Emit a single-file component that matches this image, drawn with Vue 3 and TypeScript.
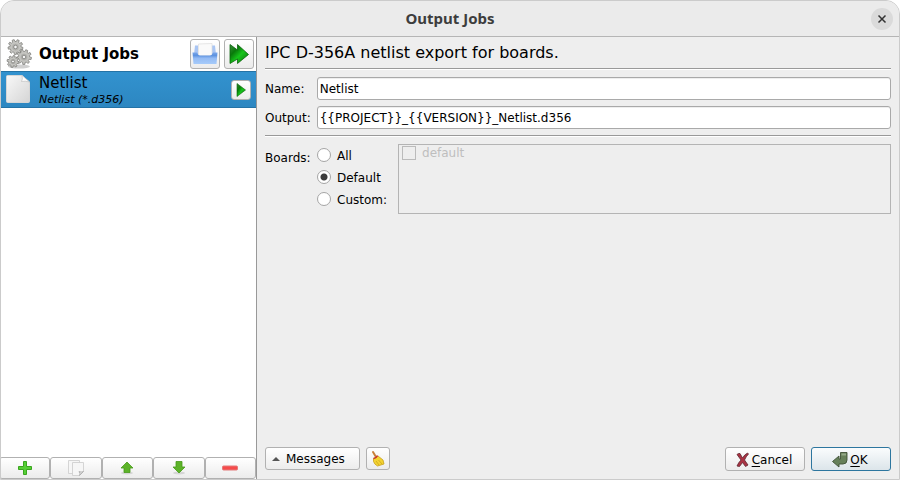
<script setup lang="ts">
import { ref } from 'vue'

type Scope = 'all' | 'default' | 'custom'

const name = ref('Netlist')
const output = ref('{{PROJECT}}_{{VERSION}}_Netlist.d356')
const scope = ref<Scope>('default')
const scopes: { value: Scope; label: string }[] = [
  { value: 'all', label: 'All' },
  { value: 'default', label: 'Default' },
  { value: 'custom', label: 'Custom:' },
]

// Outline of a toothed wheel: each tooth is a trapezoid between the inner and outer radius.
function gearPath(x: number, y: number, r: number, teeth: number): string {
  const step = (Math.PI * 2) / teeth
  const profile: [number, number][] = [
    [-0.32, r * 0.74],
    [-0.2, r],
    [0.2, r],
    [0.32, r * 0.74],
  ]
  const points: string[] = []
  for (let i = 0; i < teeth; i++) {
    for (const [offset, radius] of profile) {
      const a = (i + offset) * step + 0.2
      points.push(`${(x + radius * Math.cos(a)).toFixed(2)} ${(y + radius * Math.sin(a)).toFixed(2)}`)
    }
  }
  return `M${points.join('L')}z`
}

const gears = [
  { x: 9.5, y: 8, r: 7.5, teeth: 9 },
  { x: 18, y: 18, r: 7.5, teeth: 9 },
  { x: 7, y: 22.5, r: 6, teeth: 8 },
].map((g) => ({ ...g, d: gearPath(g.x, g.y, g.r, g.teeth) }))
</script>

<template>
  <div class="window">
    <header class="titlebar">
      <h1>Output Jobs</h1>
      <button class="close" type="button" aria-label="Close">
        <svg width="22" height="22" viewBox="0 0 22 22"><path d="M7.5 7.5l7 7M14.5 7.5l-7 7" stroke="#333" stroke-width="1.5" /></svg>
      </button>
    </header>

    <div class="body">
      <aside class="side">
        <div class="side-head">
          <svg class="gears" width="28" height="30" viewBox="0 0 28 30">
            <ellipse cx="13" cy="27.5" rx="11" ry="2" fill="#d0d0d0" />
            <g v-for="g in gears" :key="g.x">
              <path :d="g.d" fill="#c4c4c0" stroke="#80807c" stroke-width=".8" />
              <circle :cx="g.x" :cy="g.y" :r="g.r * 0.45" fill="#b2b2ae" />
              <circle :cx="g.x" :cy="g.y" :r="g.r * 0.24" fill="#f4f4f4" stroke="#7c7c78" stroke-width=".8" />
            </g>
          </svg>
          <h2>Output Jobs</h2>
          <button class="btn tool" type="button" aria-label="Open output folder">
            <svg width="26" height="26" viewBox="0 0 26 26">
              <defs>
                <linearGradient id="tray" x2="0" y2="1"><stop offset="0" stop-color="#7ba7ea" /><stop offset=".25" stop-color="#5b91df" /><stop offset=".5" stop-color="#94bbf4" /><stop offset="1" stop-color="#a6cbfa" /></linearGradient>
              </defs>
              <path d="M3 4.5h3v9H2zM20 4.5h3l1 9h-4z" fill="#a9c5f3" />
              <path d="M6.5 3l13.5-.5V15h-13.500z" fill="#fafafa" stroke="#ddd" stroke-width=".7" />
              <path d="M.5 11.500h4.500q1 3 3 3h10q2 0 3-3h4.500l-1 11.500h-23z" fill="url(#tray)" />
            </svg>
          </button>
          <button class="btn tool" type="button" aria-label="Run all jobs">
            <svg width="22" height="22" viewBox="0 0 22 22">
              <defs>
                <linearGradient id="run" x2="1" y2="1"><stop offset="0" stop-color="#3c8a3c" /><stop offset=".3" stop-color="#087a0a" /><stop offset=".55" stop-color="#17c41b" /><stop offset="1" stop-color="#086a0a" /></linearGradient>
              </defs>
              <path d="M2 1.5L9.5 7V1.5L20.5 11.500L9.5 20.500V16L2 20.500z" fill="url(#run)" stroke="#0a640c" stroke-width=".8" />
            </svg>
          </button>
        </div>

        <ul class="jobs">
          <li class="job">
            <svg class="file" width="24" height="29" viewBox="0 0 24 29">
              <defs><linearGradient id="page" x2="1" y2="1"><stop offset="0" stop-color="#f8f8f8" /><stop offset="1" stop-color="#d5d5d5" /></linearGradient></defs>
              <path d="M1.5 .5h14.500L23.500 7v19.500q0 1-1 1H1.500q-1 0-1-1V1.500q0-1 1-1z" fill="url(#page)" stroke="#d6d6d6" />
              <path d="M16 .5q1 4-.5 6 3.500-1 8 .5z" fill="#fff" stroke="#bbb" stroke-width=".6" />
            </svg>
            <div class="job-text">
              <span class="job-name">{{ name }}</span>
              <em>Netlist (*.d356)</em>
            </div>
            <button class="btn play" type="button" aria-label="Run job">
              <svg width="12" height="14" viewBox="0 0 12 14"><path d="M2 .5L10.500 7L2 13.500z" fill="url(#run)" stroke="#0a640c" stroke-width=".6" /></svg>
            </button>
          </li>
        </ul>

        <div class="actions">
          <button class="btn" type="button" aria-label="Add job">
            <svg width="16" height="16" viewBox="0 0 16 16"><path d="M6.500 1.500h3v5h5v3h-5v5h-3v-5h-5v-3h5z" fill="#55cf35" stroke="#3aa51f" /></svg>
          </button>
          <button class="btn" type="button" aria-label="Duplicate job" disabled>
            <svg width="18" height="18" viewBox="0 0 18 18" fill="#f6f6f6" stroke="#ccc" stroke-width=".8"><path d="M1.500 1.500h11v13h-11z" /><path d="M5.500 3.500h11v9l-4 4h-7z" /><path d="M12.500 16.500q1-2-.5-4 2 1 4.500 0z" fill="#ddd" stroke="#aaa" /></svg>
          </button>
          <button class="btn" type="button" aria-label="Move up">
            <svg width="16" height="16" viewBox="0 0 16 16"><ellipse cx="8" cy="13" rx="6" ry="1.500" fill="#d5d5d5" /><path d="M8 2l6 6h-3v4.500H5V8H2z" fill="#5db329" stroke="#489b1b" stroke-width=".8" /></svg>
          </button>
          <button class="btn" type="button" aria-label="Move down">
            <svg width="16" height="16" viewBox="0 0 16 16"><ellipse cx="8" cy="13" rx="6" ry="1.500" fill="#d5d5d5" /><path d="M8 13l6-6h-3V1.500H5V7H2z" fill="#5db329" stroke="#489b1b" stroke-width=".8" /></svg>
          </button>
          <button class="btn" type="button" aria-label="Remove job">
            <svg width="16" height="16" viewBox="0 0 16 16"><rect x=".5" y="6" width="15" height="4" rx="1" fill="#f64b4b" stroke="#e27a7a" /></svg>
          </button>
        </div>
      </aside>

      <main class="main">
        <h2 class="heading">IPC D-356A netlist export for boards.</h2>
        <hr />
        <div class="fields">
          <label for="job-name">Name:</label>
          <input id="job-name" v-model="name" class="text" type="text" />
          <label for="job-output">Output:</label>
          <input id="job-output" v-model="output" class="text" type="text" />
        </div>
        <hr />
        <div class="boards">
          <span id="boards-label" class="boards-label">Boards:</span>
          <div class="radios" role="radiogroup" aria-labelledby="boards-label">
            <label v-for="s in scopes" :key="s.value" class="option">
              <input v-model="scope" type="radio" name="scope" :value="s.value" />{{ s.label }}
            </label>
          </div>
          <div class="list">
            <label class="option off"><input type="checkbox" :disabled="scope !== 'custom'" />default</label>
          </div>
        </div>

        <footer class="footer">
          <button class="btn small messages" type="button">
            <svg width="8" height="4" viewBox="0 0 8 4"><path d="M4 0l4 4H0z" fill="#555" /></svg>Messages
          </button>
          <button class="btn small clear" type="button" aria-label="Clear messages">
            <svg width="16" height="18" viewBox="0 0 16 18">
              <path d="M3 2l3 5" stroke="#c8813a" stroke-width="2" stroke-linecap="round" />
              <path d="M3.500 8.500q2.500 0 4.500-2.500l5 4 1 4-6.500 2q-3-1.500-4-4.500z" fill="#f3d331" stroke="#c79f1a" stroke-width=".8" />
              <path d="M3.500 8.500q3-.5 4-3" fill="none" stroke="#c9342b" stroke-width="1.500" />
              <path d="M6 11l3 4M8.500 10l3.500 4" stroke="#cda41d" stroke-width=".8" />
            </svg>
          </button>
          <span class="spacer"></span>
          <button class="btn wide" type="button">
            <svg width="14" height="16" viewBox="0 0 14 16"><path d="M1 2.500q1.500-1.500 3-1L6.500 6Q8.500 2.500 11.500 1l1 1Q10 4.500 8.500 8l3.500 5-2.500 1.500L6.500 10.500Q5 12.500 3.500 14.500l-2.500-.5Q2.500 10.500 5 8z" fill="#a93343" stroke="#5e2630" stroke-width=".8" /></svg>
            <span><u>C</u>ancel</span>
          </button>
          <button class="btn wide primary" type="button">
            <svg width="16" height="16" viewBox="0 0 16 16"><path d="M8.500 .5h6.500v7.500q0 4-4 4H7v3L.5 9.500 7 4v3h1.500z" fill="#66805a" stroke="#3e5037" stroke-width=".9" /><path d="M9.500 1.500h4.500v2H9.500z" fill="#94a989" /></svg>
            <span><u>O</u>K</span>
          </button>
        </footer>
      </main>
    </div>
  </div>
</template>

<style>
body {
  background: #fff;
}
</style>

<style scoped>
.window,
.window * {
  box-sizing: border-box;
}
.window {
  display: flex;
  flex-direction: column;
  min-height: 100vh;
  overflow: hidden;
  border: 1px solid #cbcbcb;
  border-radius: 14px 14px 0 0;
  background: #eee;
  color: #000;
  font: 12px/16px "DejaVu Sans", sans-serif;
}
h1,
h2 {
  margin: 0;
}
svg {
  display: block;
  flex: none;
}
button,
input {
  margin: 0;
  font: inherit;
  color: inherit;
}
.titlebar {
  display: grid;
  grid-template-columns: 1fr auto 1fr;
  align-items: center;
  height: 36px;
  padding: 0 6px;
  border-bottom: 1px solid #b5b5b5;
  background: #ebebeb;
}
.titlebar h1 {
  grid-column: 2;
  padding-bottom: 2px;
  color: #3d3d3d;
  font: bold 15px/20px "Noto Sans", sans-serif;
}
.close {
  justify-self: end;
  padding: 0;
  border: 0;
  border-radius: 50%;
  background: #dadada;
}
.body {
  display: grid;
  flex: 1;
  grid-template-columns: 256px 1fr;
}
.side {
  display: flex;
  flex-direction: column;
  border-right: 1px solid #999;
  background: #fff;
}
.side-head {
  display: flex;
  align-items: center;
  gap: 4px;
  height: 34px;
  padding: 0 2px 0 5px;
}
.side-head h2 {
  flex: 1;
  padding-left: 1px;
  font-size: 15px;
  line-height: 20px;
}
.btn {
  display: flex;
  align-items: center;
  justify-content: center;
  padding: 0;
  border: 1px solid #b1b1b1;
  border-radius: 3px;
  background: linear-gradient(#fff, #ececec);
}
.tool {
  width: 30px;
  height: 30px;
}
.jobs {
  flex: 1;
  margin: 0;
  padding: 0;
  list-style: none;
}
.job {
  display: flex;
  align-items: center;
  gap: 8px;
  height: 37px;
  padding: 0 5px;
  border: solid #2473a6;
  border-width: 1px 0;
  background: linear-gradient(#3292cf, #2d87c1);
}
.job-text {
  display: flex;
  flex: 1;
  flex-direction: column;
  padding: 2px 0 0 1px;
}
.job-name {
  font-size: 15px;
  line-height: 18px;
}
.job-text em {
  font-size: 11px;
  line-height: 16px;
}
.play {
  width: 20px;
  height: 20px;
}
.actions {
  display: grid;
  grid-template-columns: repeat(5, 1fr);
  margin-left: -2px;
}
.actions .btn {
  height: 22px;
}
.main {
  display: flex;
  flex-direction: column;
  padding: 0 8px 8px;
}
.heading {
  padding: 6px 0 5px;
  font-size: 16px;
  font-weight: normal;
  line-height: 20px;
}
hr {
  width: 100%;
  height: 2px;
  margin: 0;
  border: 0;
  border-top: 1px solid #999;
  background: #fff;
}
.fields {
  display: grid;
  grid-template-columns: auto 1fr;
  align-items: center;
  gap: 6px;
  padding: 7px 0 6px;
}
.text {
  width: 100%;
  height: 23px;
  padding: 0 2px;
  border: 1px solid #a9a9a9;
  border-radius: 3px;
  background: #fff;
  box-shadow: inset 0 1px #eee;
}
.boards {
  display: flex;
  padding-top: 7px;
}
.boards-label {
  width: 52px;
  padding-top: 6px;
}
.radios {
  display: grid;
  gap: 6px;
  align-content: start;
  padding-top: 4px;
}
.option {
  display: flex;
  align-items: center;
  gap: 6px;
}
.option input {
  appearance: none;
  width: 14px;
  height: 14px;
  border: 1px solid #a5a5a5;
  background: #fff;
}
.radios .option {
  align-items: flex-start;
}
.radios input {
  border-radius: 50%;
}
.radios input:checked {
  background: radial-gradient(circle, #3b3b3b 3px, #fff 4px);
}
.list {
  flex: 1;
  height: 70px;
  margin-left: 11px;
  padding: 0 3px;
  border: 1px solid #b4b4b4;
}
.off {
  color: #bebebe;
}
.off input {
  border-color: #bbb;
  background: #eee;
}
.footer {
  display: flex;
  gap: 6px;
  margin-top: auto;
}
.footer .btn {
  height: 24px;
}
.footer .small {
  height: 23px;
}
.footer .messages {
  justify-content: flex-start;
  gap: 6px;
  width: 95px;
  padding-left: 6px;
}
.footer .clear {
  width: 24px;
}
.spacer {
  flex: 1;
}
.wide {
  gap: 2px;
  width: 80px;
  padding: 1px 2px 0 0;
}
.primary {
  border-color: #2d769f;
  background: linear-gradient(#fafcfd, #dce5ea);
}
u {
  text-underline-offset: 2px;
}
</style>
